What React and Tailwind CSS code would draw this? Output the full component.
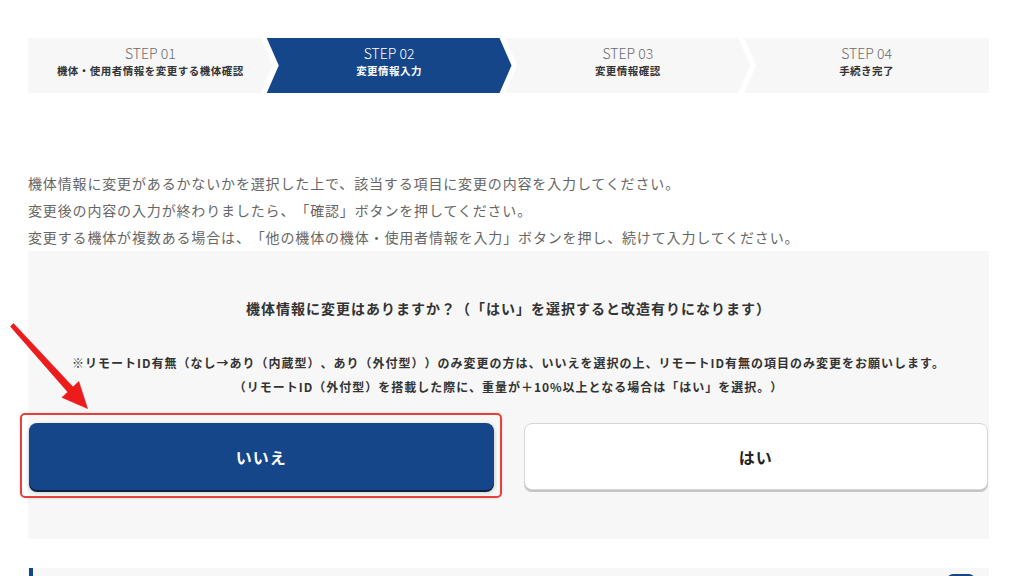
const steps = [
  { no: "STEP 01", label: "機体・使用者情報を変更する機体確認" },
  { no: "STEP 02", label: "変更情報入力", active: true },
  { no: "STEP 03", label: "変更情報確認" },
  { no: "STEP 04", label: "手続き完了" },
];

const clips = [
  "[clip-path:polygon(0_0,calc(100%-12px)_0,100%_50%,calc(100%-12px)_100%,0_100%)]",
  "[clip-path:polygon(0_0,calc(100%-12px)_0,100%_50%,calc(100%-12px)_100%,0_100%,12px_50%)]",
  "[clip-path:polygon(0_0,calc(100%-12px)_0,100%_50%,calc(100%-12px)_100%,0_100%,12px_50%)]",
  "[clip-path:polygon(0_0,100%_0,100%_100%,0_100%,12px_50%)]",
];

const StepBar = () => (
  <div className="flex h-[55px]">
    {steps.map((s, i) => (
      <div
        key={s.no}
        className={`flex-1 flex flex-col items-center justify-center pb-[9px] ${i > 0 ? "-ml-[6px]" : ""} ${clips[i]} ${
          s.active ? "bg-[#16468a] text-white" : "bg-[#f7f7f7] text-[#333]"
        }`}
      >
        <div className={`text-[14px] leading-[19px] font-light ${s.active ? "text-white" : "text-[#6b6b6b]"}`}>
          {s.no}
        </div>
        <div className="text-[10.5px] leading-[16px] font-bold tracking-[0.5px]">{s.label}</div>
      </div>
    ))}
  </div>
);

const RedArrow = () => (
  <svg className="absolute left-0 top-[318px] pointer-events-none" width="100" height="100" viewBox="0 318 100 100">
    <polygon
      points="13.5,323.5 73,387 78.8,381.6 87.5,408.5 62,397.4 67.8,392 10.5,326.5"
      fill="#ec1c1c"
      stroke="#e41515"
      strokeWidth="0.6"
      strokeLinejoin="round"
    />
  </svg>
);

export default function App() {
  return (
    <div
      className="relative w-[1024px] h-[576px] overflow-hidden bg-white [text-spacing-trim:space-all]"
      style={{ fontFamily: '"Noto Sans CJK JP", "Noto Sans", sans-serif' }}
    >
      <div className="ml-[28px] w-[961px] pt-[38px]">
        <StepBar />

        <div className="mt-[77px] text-[14px] leading-[27px] tracking-[0.85px] text-[#666]">
          <p>機体情報に変更があるかないかを選択した上で、該当する項目に変更の内容を入力してください。</p>
          <p>変更後の内容の入力が終わりましたら、「確認」ボタンを押してください。</p>
          <p>変更する機体が複数ある場合は、「他の機体の機体・使用者情報を入力」ボタンを押し、続けて入力してください。</p>
        </div>

        <div className="bg-[#f7f7f7] px-px pt-[45px] pb-[49px]">
          <h2 className="text-center text-[14px] leading-[24px] font-bold tracking-[1px] text-[#333]">
            機体情報に変更はありますか？（「はい」を選択すると改造有りになります）
          </h2>
          <div className="mt-[31px] text-center text-[12px] leading-[24px] font-bold tracking-[1px] text-[#333]">
            <p>※リモートID有無（なし→あり（内蔵型）、あり（外付型））のみ変更の方は、いいえを選択の上、リモートID有無の項目のみ変更をお願いします。</p>
            <p>（リモートID（外付型）を搭載した際に、重量が＋10%以上となる場合は「はい」を選択。）</p>
          </div>

          <div className="mt-[24px] flex gap-[30px]">
            <div className="relative flex-1">
              <span className="absolute -left-[9px] -right-[8px] -top-[10px] -bottom-[8px] rounded-[5px] border-2 border-[#e2413c] shadow-[0_0_3px_rgba(0,0,0,0.15)]" />
              <button className="relative w-full h-[67px] rounded-[8px] bg-[#16468a] text-white text-[16px] font-bold tracking-[1px] shadow-[0_2px_0_#0a2245,0_2px_4px_rgba(0,0,0,0.25)]">
                いいえ
              </button>
            </div>
            <div className="flex-1">
              <button className="w-full h-[67px] rounded-[8px] bg-white border border-[#d6d6d6] text-[#222] text-[16px] font-bold tracking-[1px] shadow-[0_2px_0_#c4c4c4]">
                はい
              </button>
            </div>
          </div>
        </div>

        <div className="mt-[29px] flex h-[40px] bg-[#f7f7f7]">
          <div className="w-[4px] ml-px bg-[#16468a]" />
          <div className="flex-1" />
          <div className="mt-[6px] mr-[14px] w-[28px] h-[28px] rounded-[6px] bg-[#16468a]" />
        </div>
      </div>

      <RedArrow />
    </div>
  );
}
